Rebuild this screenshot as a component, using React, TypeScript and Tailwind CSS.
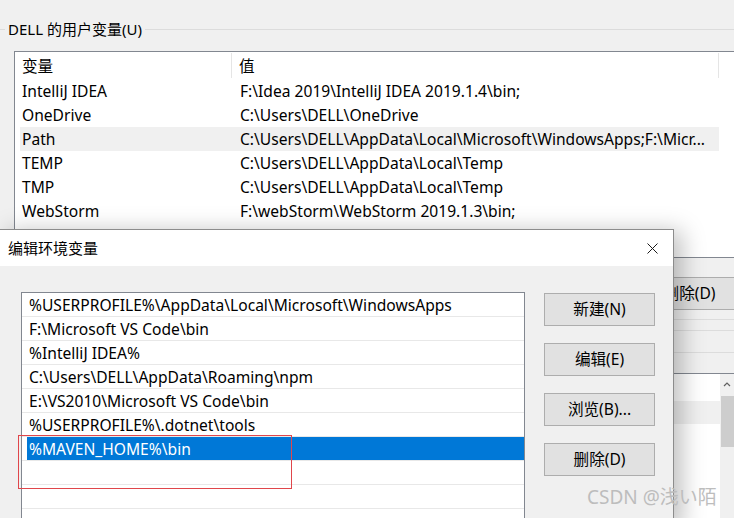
const userVars = [
  { name: 'IntelliJ IDEA', value: 'F:\\Idea 2019\\IntelliJ IDEA 2019.1.4\\bin;' },
  { name: 'OneDrive', value: 'C:\\Users\\DELL\\OneDrive' },
  { name: 'Path', value: 'C:\\Users\\DELL\\AppData\\Local\\Microsoft\\WindowsApps;F:\\Micr...', hover: true },
  { name: 'TEMP', value: 'C:\\Users\\DELL\\AppData\\Local\\Temp' },
  { name: 'TMP', value: 'C:\\Users\\DELL\\AppData\\Local\\Temp' },
  { name: 'WebStorm', value: 'F:\\webStorm\\WebStorm 2019.1.3\\bin;' },
  { name: '', value: '' },
];

const pathEntries = [
  '%USERPROFILE%\\AppData\\Local\\Microsoft\\WindowsApps',
  'F:\\Microsoft VS Code\\bin',
  '%IntelliJ IDEA%',
  'C:\\Users\\DELL\\AppData\\Roaming\\npm',
  'E:\\VS2010\\Microsoft VS Code\\bin',
  '%USERPROFILE%\\.dotnet\\tools',
];

function WinButton({ label }: { label: string }) {
  return (
    <div className="w-[111px] h-[33px] bg-[#e1e1e1] border border-[#adadad] flex items-center justify-center leading-none">
      {label}
    </div>
  );
}

function BackgroundWindow() {
  return (
    <div className="pt-[19px]">
      {/* group box caption */}
      <div className="flex items-center h-[20px]">
        <div className="w-[5px] h-px bg-[#dcdcdc]" />
        <span className="px-[3px] leading-[20px] text-[15px]">DELL 的用户变量(U)</span>
        <div className="flex-1 h-px bg-[#dcdcdc]" />
      </div>

      {/* user variables list */}
      <div className="ml-[14px] mt-[12px] h-[207px] border-l border-t border-b border-[#828790] bg-white overflow-hidden">
        <div className="flex h-[27px] pl-[5px] items-center">
          <div className="w-[212px] h-[25px] pl-[2px] pt-[2px] border-r border-[#e5e5e5] flex items-center">变量</div>
          <div className="w-[487px] h-[25px] pl-[7px] pt-[2px] border-r border-[#e5e5e5] flex items-center">值</div>
        </div>
        {userVars.map((v, i) => (
          <div key={i} className="pl-[5px]">
            <div className={`flex h-[24px] pt-[2px] items-center w-[699px] ${v.hover ? 'bg-[#f0f0f0]' : ''}`}>
              <div className="w-[212px] pl-[2px] whitespace-nowrap">{v.name}</div>
              <div className="w-[487px] pl-[8px] whitespace-nowrap overflow-hidden">{v.value}</div>
            </div>
          </div>
        ))}
      </div>

      <div className="mt-[19px] pl-[634px]">
        <WinButton label="删除(D)" />
      </div>
      <div className="mt-[9px] h-px bg-[#dcdcdc]" />
      <div className="mt-[10px] h-px bg-[#dcdcdc]" />
      <div className="mt-[21px] h-px bg-[#dcdcdc]" />

      {/* system variables list */}
      <div className="ml-[14px] mt-[20px] h-[200px] border-l border-t border-[#828790] bg-white flex">
        <div className="flex-1 pt-[27px] pl-[5px]">
          <div className="h-[23px] bg-[#f0f0f0]" />
        </div>
        <div className="w-[14px] bg-[#f0f0f0] flex flex-col items-center">
          <svg width="10" height="18" viewBox="0 0 10 18" className="mt-[1px]">
            <path d="M2 11 L5 8 L8 11" fill="none" stroke="#606060" strokeWidth="1.2" />
          </svg>
          <div className="w-[13px] h-[51px] mt-[3px] bg-[#cdcdcd]" />
        </div>
      </div>
    </div>
  );
}

function EditDialog() {
  return (
    <div className="absolute left-0 top-[229px] w-[674px] h-[300px] border-t border-r border-[#8c8c8c] bg-[#f0f0f0] shadow-[8px_2px_22px_rgba(0,0,0,0.25)]">
      <div className="h-[36px] bg-white flex items-center justify-between pl-[8px] pr-[15px] text-[15px]">
        <span className="leading-none">编辑环境变量</span>
        <svg width="11" height="11" viewBox="0 0 11 11">
          <path d="M0.5 0.5 L10.5 10.5 M10.5 0.5 L0.5 10.5" stroke="#1a1a1a" strokeWidth="1" />
        </svg>
      </div>

      <div className="flex pt-[26px] pl-[21px]">
        <div className="w-[504px] h-[240px] border-l border-t border-r border-[#828790] bg-white">
          {pathEntries.map((p) => (
            <div key={p} className="h-[24px] border-b border-[#e8e8e8] pl-[7px] pt-[2px] flex items-center whitespace-nowrap">
              {p}
            </div>
          ))}
          <div className="h-[24px] border-b border-[#e8e8e8] pl-[5px]">
            <div className="h-[23px] bg-[#0078d7] text-white pl-[2px] pt-[2px] flex items-center">%MAVEN_HOME%\bin</div>
          </div>
          <div className="h-[24px] border-b border-[#e8e8e8]" />
          <div className="h-[24px] border-b border-[#e8e8e8]" />
        </div>

        <div className="ml-[19px] pt-[1px] flex flex-col gap-[17px]">
          <WinButton label="新建(N)" />
          <WinButton label="编辑(E)" />
          <WinButton label="浏览(B)..." />
          <WinButton label="删除(D)" />
        </div>
      </div>
    </div>
  );
}

export default function App() {
  return (
    <div className="relative w-[734px] h-[518px] overflow-hidden bg-[#f0f0f0] text-[15.6px] text-black font-['Noto_Sans','Noto_Sans_CJK_SC',sans-serif]">
      <BackgroundWindow />
      <EditDialog />
      {/* annotation box */}
      <div className="absolute left-[18px] top-[435px] w-[274px] h-[54px] border border-[#e0464b]" />
      {/* watermark */}
      <div className="absolute left-[587px] top-[484px] text-[19px] leading-[26px] text-[#bdbdbd]">CSDN @浅い陌</div>
    </div>
  );
}
